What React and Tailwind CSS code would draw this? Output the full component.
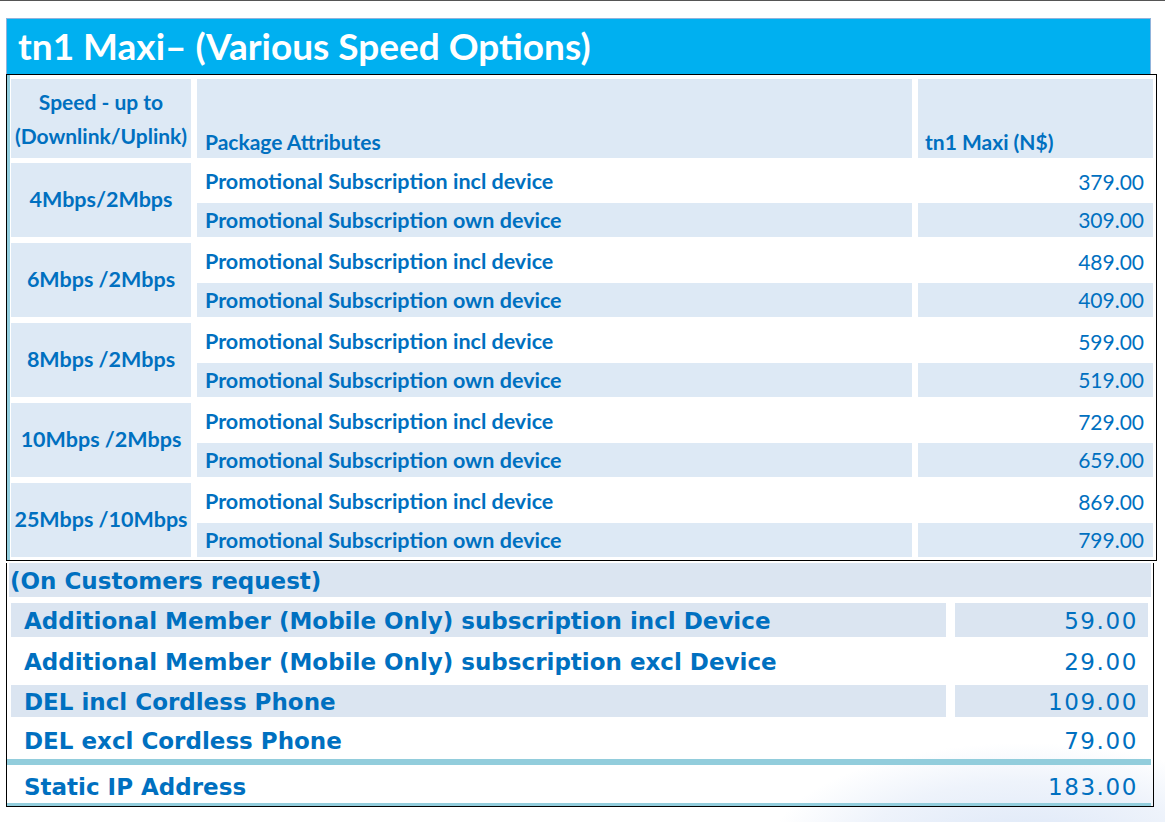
const groups = [
  { speed: "4Mbps/2Mbps", incl: "379.00", own: "309.00" },
  { speed: "6Mbps /2Mbps", incl: "489.00", own: "409.00" },
  { speed: "8Mbps /2Mbps", incl: "599.00", own: "519.00" },
  { speed: "10Mbps /2Mbps", incl: "729.00", own: "659.00" },
  { speed: "25Mbps /10Mbps", incl: "869.00", own: "799.00" },
];

const calibri = "font-['Lato','Liberation_Sans',sans-serif]";
const verdana = "font-['DejaVu_Sans','Liberation_Sans',sans-serif]";

const SpeedGroup = ({ g }) => (
  <div className="grid grid-cols-[180px_715px_235px] gap-x-[6px] h-[74px]">
    <div className="row-span-2 bg-[#dde9f5] flex items-center justify-center text-[21.5px] font-bold text-[#0070c0] pb-[2px]">
      {g.speed}
    </div>
    <div className="h-[40px] flex items-center pl-[8px] pb-[3px] text-[21.5px] font-bold text-[#0070c0]">
      Promotional Subscription incl device
    </div>
    <div className="h-[40px] flex items-center justify-end pr-[9px] pb-[3px] text-[21px] text-[#0070c0]">
      {g.incl}
    </div>
    <div className="h-[34px] bg-[#dde9f5] flex items-center pl-[8px] text-[21.5px] font-bold text-[#0070c0]">
      Promotional Subscription own device
    </div>
    <div className="h-[34px] bg-[#dde9f5] flex items-center justify-end pr-[9px] text-[21px] text-[#0070c0]">
      {g.own}
    </div>
  </div>
);

const ExtraRow = ({ label, price, shaded, className = "" }) => (
  <div className={"flex gap-x-[9px] ml-[4px] mr-[5px] " + className}>
    <div className={"w-[935px] flex items-center pl-[13px] pt-[2px] " + (shaded ? "bg-[#dbe5f1]" : "")}>
      {label}
    </div>
    <div className={"flex-1 flex items-center justify-end pr-[10px] pt-[2px] font-normal tracking-[1.6px] " + (shaded ? "bg-[#dbe5f1]" : "")}>
      {price}
    </div>
  </div>
);

export default function App() {
  return (
    <div className={"relative w-[1165px] h-[822px] bg-white overflow-hidden border-t border-[#555555] " + calibri}>
      <div className="absolute right-[-120px] bottom-[-140px] w-[520px] h-[220px] rounded-[50%] bg-[radial-gradient(ellipse_at_center,#dbe6f7_0%,#eef3fb_45%,transparent_70%)]" />

      <div className="relative pt-[17px]">
        <div className="ml-[6px] w-[1145px] h-[56px] bg-[#00b0f0] border-t border-x border-[#8fb3dc] flex items-center pl-[11px]">
          <h1 className="text-[37px] font-bold text-white leading-none pb-[2px]">
            tn1 Maxi– (Various Speed Options)
          </h1>
        </div>

        <div className="ml-[6px] w-[1151px] border border-black bg-white">
          <div className="border-l-[3px] border-[#92cddc] pl-[1px] pr-[3px] pt-[4px] pb-[3px] flex flex-col gap-y-[5px]">
            <div className="grid grid-cols-[180px_715px_235px] gap-x-[6px] h-[79px] text-[21px] font-bold text-[#0070c0]">
              <div className="bg-[#dde9f5] text-center pt-[6px] leading-[34px] whitespace-nowrap">
                Speed - up to
                <br />
                (Downlink/Uplink)
              </div>
              <div className="bg-[#dde9f5] flex items-end pl-[8px] pb-[4px] leading-[24px]">Package Attributes</div>
              <div className="bg-[#dde9f5] flex items-end pl-[7px] pb-[4px] leading-[24px]">tn1 Maxi (N$)</div>
            </div>
            <div className="flex flex-col gap-y-[6px]">
              {groups.map((g, i) => (
                <SpeedGroup key={i} g={g} />
              ))}
            </div>
          </div>
        </div>

        <div className={"ml-[6px] w-[1148px] border-x border-b border-black text-[23px] leading-none font-bold text-[#0070c0] " + verdana}>
          <div className="mt-[2px] mx-[2px] h-[34px] bg-[#dbe5f1] flex items-center pl-[1px] pt-[2px]">
            (On Customers request)
          </div>
          <ExtraRow className="mt-[6px] h-[34px]" shaded label="Additional Member (Mobile Only) subscription incl Device" price="59.00" />
          <ExtraRow className="h-[48px]" label="Additional Member (Mobile Only) subscription excl Device" price="29.00" />
          <ExtraRow className="h-[32px]" shaded label="DEL incl Cordless Phone" price="109.00" />
          <ExtraRow className="h-[41px] pt-[6px]" label="DEL excl Cordless Phone" price="79.00" />
          <div className="mt-[1px] mr-[2px] h-[6px] bg-[#92cddc]" />
          <ExtraRow className="h-[38px] pt-[4px]" label="Static IP Address" price="183.00" />
          <div className="mr-[2px] h-[3px] bg-[#92cddc]" />
        </div>
      </div>
    </div>
  );
}
